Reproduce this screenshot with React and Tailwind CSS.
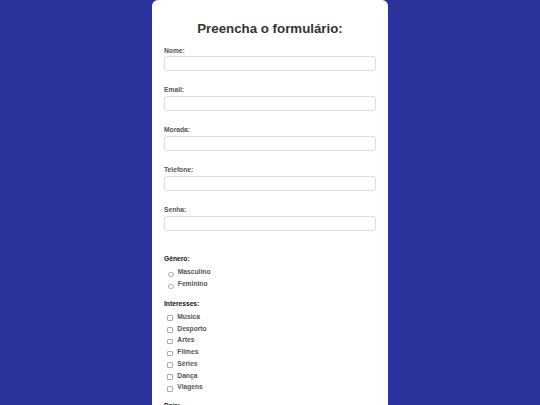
const campos = ['Nome:', 'Email:', 'Morada:', 'Telefone:', 'Senha:'];
const interesses = ['Música', 'Desporto', 'Artes', 'Filmes', 'Séries', 'Dança', 'Viagens'];

export default function App() {
    return (
        <div className="h-[405px] overflow-hidden bg-[#2a339b] font-['Liberation_Sans',Arial,sans-serif]">
            <div className="mx-auto w-[236px] min-h-[420px] bg-white rounded-t-[6px] px-3 pt-[20.5px]">
                <h1 className="text-[13.3px] leading-[16px] font-bold text-[#333] text-center">
                    Preencha o formulário:
                </h1>
                <div className="mt-[10px] flex flex-col gap-[15.8px]">
                    {campos.map((c) => (
                        <div key={c}>
                            <label className="block text-[6.7px] leading-[8px] font-bold text-[#555]">{c}</label>
                            <input
                                type="text"
                                className="mt-[1.7px] block w-[212px] h-[14.5px] border border-[#ddd] rounded-[3px] bg-white outline-none"
                            />
                        </div>
                    ))}
                </div>
                <div className="mt-[24.8px] text-[6.7px] leading-[8px] font-bold text-[#111]">Gênero:</div>
                <div className="mt-[4.3px]">
                    {['Masculino', 'Feminino'].map((g) => (
                        <div key={g} className="flex h-[12px] items-start">
                            <span className="ml-[4.3px] mt-[4px] w-[5.5px] h-[5.5px] rounded-full border border-[#aaa] bg-white"></span>
                            <span className="ml-[4px] text-[6.7px] leading-[8px] font-bold text-[#555]">{g}</span>
                        </div>
                    ))}
                </div>
                <div className="mt-[8.7px] text-[6.7px] leading-[8px] font-bold text-[#111]">Interesses:</div>
                <div className="mt-[4.3px]">
                    {interesses.map((i) => (
                        <div key={i} className="flex h-[11.8px] items-start">
                            <span className="ml-[3.3px] mt-[2.6px] w-[5.5px] h-[5.5px] rounded-[1px] border border-[#aaa] bg-white"></span>
                            <span className="ml-[4.5px] text-[6.7px] leading-[8px] font-bold text-[#555]">{i}</span>
                        </div>
                    ))}
                </div>
                <div className="mt-[6.4px] text-[6.7px] leading-[8px] font-bold text-[#111]">País:</div>
            </div>
        </div>
    );
}
